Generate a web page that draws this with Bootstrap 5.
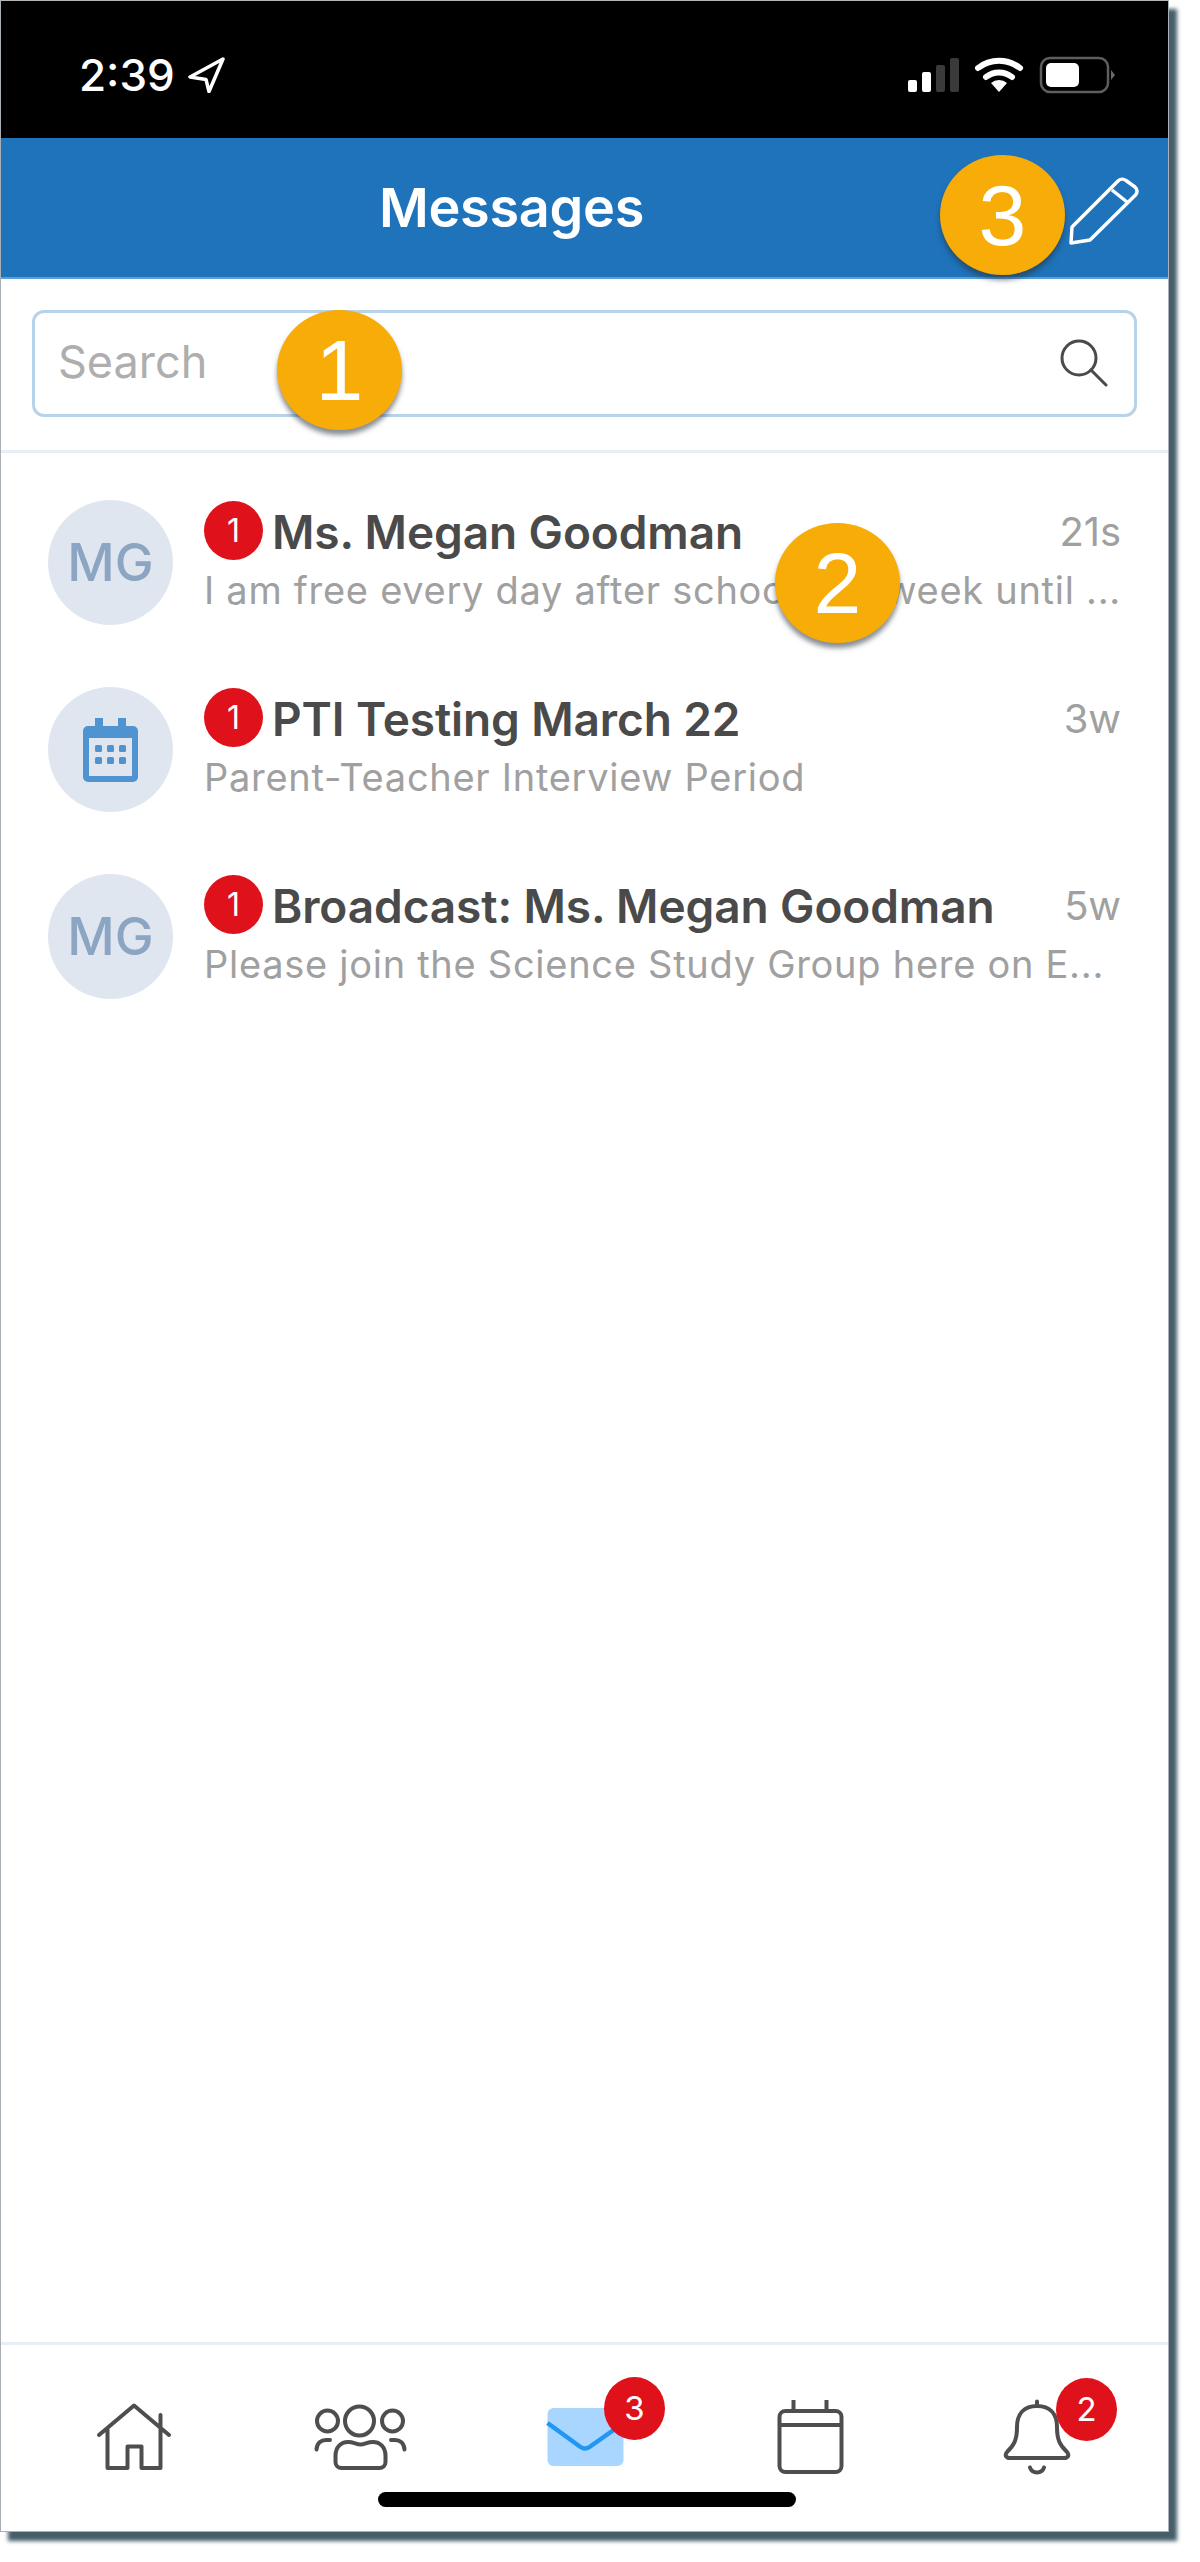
<!DOCTYPE html>
<html lang="en">
<head>
<meta charset="utf-8">
<title>Messages</title>
<link href="https://cdn.jsdelivr.net/npm/bootstrap@5.3.0/dist/css/bootstrap.min.css" rel="stylesheet">
<style>
html,body{margin:0;height:2562px;background:#fff;overflow:hidden}
body{font-family:Inter,"Liberation Sans",sans-serif}
.phone{position:relative;width:1169px;height:2532px;border:1px solid #a8b0b5;border-top-color:#b5b5b5;box-shadow:8px 9px 4px rgba(50,75,90,.9);background:#fff}
.statusbar{height:137px;background:#000;color:#fff;padding:49px 53px 0 78px}
.clock{font-size:44px;font-weight:500;line-height:50px}
.statusicons{margin-top:6px}
.appbar{height:141px;background:#1e73bb;color:#fff;border-bottom:2px solid #5b9fd6}
.apptitle{font-size:54px;font-weight:600;width:1021px;text-align:center;letter-spacing:-.3px}
.penicon{margin:4px 0 0 47px}
.searchwrap{height:174px;padding:31px 31px 0;border-bottom:3px solid #e6eff7}
.searchbox{height:107px;border:3px solid #b7d3ea;border-radius:12px;padding:0 26px 3px 23px;color:#aeaeae;font-size:45px}
.msgs{height:1889px;padding-top:16px}
.msg{height:187px;padding:0 47px 0 47px;gap:31px}
.ava{width:125px;height:125px;border-radius:50%;background:#dfe6ef;color:#8ba5c2;font-size:52px;font-weight:500;flex:none}
.msgbody{min-width:0;flex:1 1 auto;padding-bottom:6px}
.msgtitle{font-size:46px;font-weight:600;color:#4a4a4a;line-height:60px;gap:9px;letter-spacing:-.1px}
.dot{width:59px;height:59px;border-radius:50%;background:#df111b;color:#fff;font-size:32px;font-weight:400;flex:none;margin-top:-2px}
.when{font-size:40px;font-weight:400;color:#a0a0a0}
.preview{font-size:38px;color:#a0a0a0;line-height:56px;letter-spacing:.72px;white-space:nowrap}
.tabbar{border-top:3px solid #e6eff7;height:189px;position:relative;padding:0 21px}
.tabcell{position:relative;flex:1 1 0;padding-top:55px}
.tabcell svg{display:block;margin:0 auto;overflow:visible}
.count{position:absolute;top:32px;left:132px;width:61px;height:63px;border-radius:50%;background:#df111b;color:#fff;font-size:33px;font-weight:400}
.indicator{position:absolute;left:377px;top:147px;width:418px;height:15px;border-radius:8px;background:#000}
.callout{position:absolute;width:125px;height:120px;border-radius:50%;background:#f7ac08;color:#fff;font:86px/120px "Liberation Sans",sans-serif;text-align:center;box-shadow:0 5px 5px rgba(40,50,60,.55)}
</style>
</head>
<body>
<div class="phone">
  <div class="statusbar d-flex justify-content-between align-items-start">
    <div class="d-flex align-items-center" style="gap:13px"><span class="clock">2:39</span>
      <svg width="37" height="36" viewBox="0 0 37 36"><path d="M35 2 2 20l16 2.500 3 12z" fill="none" stroke="#fff" stroke-width="3.500" stroke-linejoin="round"/></svg>
    </div>
    <svg width="207" height="38" viewBox="0 0 207 38" class="d-block statusicons">
      <rect x="0" y="24" width="9" height="12" rx="2" fill="#fff"/><rect x="14" y="16" width="9" height="20" rx="2" fill="#fff"/><rect x="28" y="9" width="9" height="27" rx="2" fill="#3a3a3a"/><rect x="42" y="2" width="9" height="34" rx="2" fill="#3a3a3a"/>
      <path d="M70 12a34 34 0 0 1 42 0M78 21a21 21 0 0 1 26 0" fill="none" stroke="#fff" stroke-width="6" stroke-linecap="round"/><path d="M83 27a12 12 0 0 1 16 0l-8 9z" fill="#fff"/>
      <rect x="133" y="2" width="67" height="34" rx="9" fill="none" stroke="#5e5e5e" stroke-width="2.500"/><rect x="138" y="7" width="33" height="24" rx="5" fill="#fff"/><path d="M203 14l4 5-4 5z" fill="#6a6a6a"/>
    </svg>
  </div>
  <div class="appbar d-flex align-items-center">
    <div class="apptitle">Messages</div>
    <svg class="penicon" width="70" height="70" viewBox="0 0 70 70"><path d="M2 68l1-16L49 6a6 6 0 0 1 8-.5L66 12a5.500 5.500 0 0 1 .5 8L21 65zM43 15l15 12" fill="none" stroke="#fff" stroke-width="3.500" stroke-linejoin="round"/></svg>
  </div>
  <div class="searchwrap">
    <div class="searchbox d-flex align-items-center justify-content-between">
      <span>Search</span>
      <svg width="50" height="50" viewBox="0 0 50 50"><circle cx="21" cy="21" r="17" fill="none" stroke="#4a4a4a" stroke-width="3"/><path d="M33 33l15 15" stroke="#4a4a4a" stroke-width="3" stroke-linecap="round"/></svg>
    </div>
  </div>
  <div class="msgs">
    <div class="msg d-flex align-items-center">
      <div class="ava d-flex align-items-center justify-content-center">MG</div>
      <div class="msgbody">
        <div class="msgtitle d-flex align-items-center"><span class="dot d-flex align-items-center justify-content-center">1</span><span class="flex-grow-1">Ms. Megan Goodman</span><span class="when">21s</span></div>
        <div class="preview">I am free every day after school this week until ...</div>
      </div>
    </div>
    <div class="msg d-flex align-items-center">
      <div class="ava d-flex align-items-center justify-content-center">
        <svg width="55" height="64" viewBox="0 0 55 64"><path d="M12 0h8v8H35V0h8v8h7a5 5 0 0 1 5 5v46a5 5 0 0 1-5 5H5a5 5 0 0 1-5-5V13a5 5 0 0 1 5-5h7zM6 20v38h43V20z" fill="#5093d1" fill-rule="evenodd"/><g fill="#5093d1"><rect x="12" y="27" width="7" height="7" rx="1.500"/><rect x="24" y="27" width="7" height="7" rx="1.500"/><rect x="36" y="27" width="7" height="7" rx="1.500"/><rect x="12" y="39" width="7" height="7" rx="1.500"/><rect x="24" y="39" width="7" height="7" rx="1.500"/><rect x="36" y="39" width="7" height="7" rx="1.500"/></g></svg>
      </div>
      <div class="msgbody">
        <div class="msgtitle d-flex align-items-center"><span class="dot d-flex align-items-center justify-content-center">1</span><span class="flex-grow-1">PTI Testing March 22</span><span class="when">3w</span></div>
        <div class="preview">Parent-Teacher Interview Period</div>
      </div>
    </div>
    <div class="msg d-flex align-items-center">
      <div class="ava d-flex align-items-center justify-content-center">MG</div>
      <div class="msgbody">
        <div class="msgtitle d-flex align-items-center"><span class="dot d-flex align-items-center justify-content-center">1</span><span class="flex-grow-1">Broadcast: Ms. Megan Goodman</span><span class="when">5w</span></div>
        <div class="preview">Please join the Science Study Group here on E...</div>
      </div>
    </div>
  </div>
  <div class="tabbar d-flex align-items-start">
    <div class="tabcell">
      <svg width="100" height="76" viewBox="-8 0 100 76" fill="none" stroke="#4e4e4e" stroke-width="4" stroke-linecap="round" stroke-linejoin="round"><path d="M6 35 41 5.500 76 35M14.500 29v39h20V46.500h14V68h19V15"/></svg>
    </div>
    <div class="tabcell">
      <svg width="100" height="76" viewBox="-8 0 100 76" fill="none" stroke="#4e4e4e" stroke-width="4" stroke-linecap="round" stroke-linejoin="round"><circle cx="41.500" cy="21" r="14.500"/><circle cx="9.500" cy="21" r="10.500"/><circle cx="74.500" cy="21" r="10.500"/><path d="M17.500 56c0-9 5.500-14 12.500-14 6 0 8 2.500 12.500 2.500S49 42 55 42c7 0 12.500 5 12.500 14v6a6 6 0 0 1-6 6h-38a6 6 0 0 1-6-6zM-1.500 49.500C-1 43 3 40 8 40h4M86.500 49.500C86 43 82 40 77 40h-4"/></svg>
    </div>
    <div class="tabcell">
      <svg width="100" height="76" viewBox="-8 0 100 76"><rect x="4.500" y="8" width="76" height="58" rx="6" fill="#a9d6ff"/><path d="M4.500 23l33 24c3 2 6 2 9 0l34-24" fill="none" stroke="#2196f3" stroke-width="4.500"/></svg>
      <span class="count d-flex align-items-center justify-content-center">3</span>
    </div>
    <div class="tabcell">
      <svg width="100" height="76" viewBox="-8 0 100 76" fill="none" stroke="#4e4e4e" stroke-width="4"><rect x="11.500" y="11" width="62" height="61" rx="6"/><path d="M11.500 25h62M25.500 0v11M58.500 0v11"/></svg>
    </div>
    <div class="tabcell">
      <svg width="100" height="76" viewBox="-8 0 100 76" fill="none" stroke="#4e4e4e" stroke-width="4" stroke-linecap="round"><path d="M44 1.500V6M44 6C31 6 24 14 24 27c0 13-3 18-9.500 24.500C11 55 13 58 17 58h54c4 0 6-3 2.500-6.500C67 45 64 40 64 27 64 14 57 6 44 6zM37 67.500c2 6.500 12 6.500 14 0"/></svg>
      <span class="count d-flex align-items-center justify-content-center" style="left:134px;top:33px">2</span>
    </div>
    <div class="indicator"></div>
  </div>
</div>
<div class="callout" style="left:277px;top:310px">1</div>
<div class="callout" style="left:775px;top:523px">2</div>
<div class="callout" style="left:940px;top:155px">3</div>
</body>
</html>
